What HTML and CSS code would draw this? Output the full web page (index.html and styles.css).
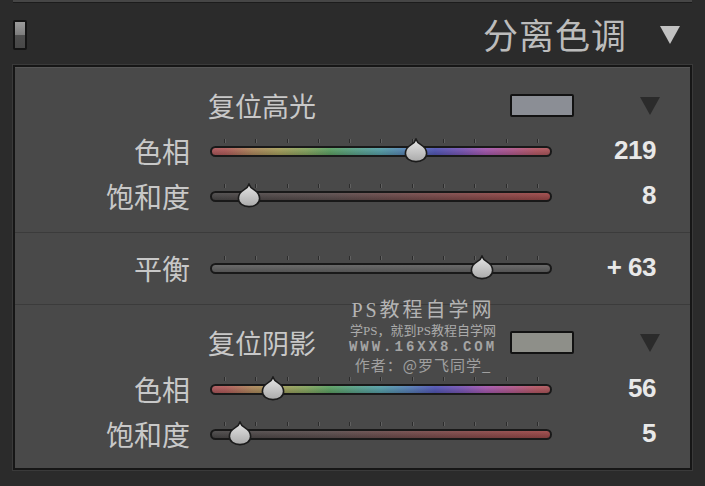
FILE: index.html
```html
<!DOCTYPE html>
<html lang="zh-CN">
<head>
<meta charset="utf-8">
<title>分离色调</title>
<link rel="stylesheet" href="styles.css">
</head>
<body>
<div class="topband"></div>
<header class="header">
  <div class="toggle"></div>
  <h1 class="title">分离色调</h1>
  <svg class="hdr-tri" width="22" height="20" viewBox="0 0 22 20"><polygon points="1,1 21,1 11,19" fill="#c2c2c2"/></svg>
</header>

<div class="panel">
  <section class="sec sec1">
    <div class="row head">
      <span class="spacer"></span>
      <span class="htext">复位高光</span>
      <span class="swatch sw-hi"></span>
      <svg class="sec-tri" width="20" height="18" viewBox="0 0 20 18"><polygon points="0,0 20,0 10,18" fill="#2b2b2b"/></svg>
    </div>
    <div class="row">
      <span class="label">色相</span>
      <div class="slider">
        <div class="ticks"><i></i><i></i><i></i><i></i><i></i><i></i><i></i><i></i><i></i><i></i><i></i></div>
        <div class="bar hue"></div>
        <svg class="thumb" style="left:206px" width="24" height="25" viewBox="0 0 24 25"><use href="#th"/></svg>
      </div>
      <span class="val">219</span>
    </div>
    <div class="row">
      <span class="label">饱和度</span>
      <div class="slider">
        <div class="ticks"><i></i><i></i><i></i><i></i><i></i><i></i><i></i><i></i><i></i><i></i><i></i></div>
        <div class="bar sat"></div>
        <svg class="thumb" style="left:39px" width="24" height="25" viewBox="0 0 24 25"><use href="#th"/></svg>
      </div>
      <span class="val">8</span>
    </div>
  </section>

  <section class="sec sec2">
    <div class="row">
      <span class="label">平衡</span>
      <div class="slider">
        <div class="ticks"><i></i><i></i><i></i><i></i><i></i><i></i><i></i><i></i><i></i><i></i><i></i></div>
        <div class="bar bal"></div>
        <svg class="thumb" style="left:272px" width="24" height="25" viewBox="0 0 24 25"><use href="#th"/></svg>
      </div>
      <span class="val">+ 63</span>
    </div>
  </section>

  <section class="sec sec3">
    <div class="row head">
      <span class="spacer"></span>
      <span class="htext">复位阴影</span>
      <span class="swatch sw-sh"></span>
      <svg class="sec-tri" width="20" height="18" viewBox="0 0 20 18"><polygon points="0,0 20,0 10,18" fill="#2b2b2b"/></svg>
    </div>
    <div class="row r-hue2">
      <span class="label">色相</span>
      <div class="slider">
        <div class="ticks"><i></i><i></i><i></i><i></i><i></i><i></i><i></i><i></i><i></i><i></i><i></i></div>
        <div class="bar hue"></div>
        <svg class="thumb" style="left:63px" width="24" height="25" viewBox="0 0 24 25"><use href="#th"/></svg>
      </div>
      <span class="val">56</span>
    </div>
    <div class="row r-sat2">
      <span class="label">饱和度</span>
      <div class="slider">
        <div class="ticks"><i></i><i></i><i></i><i></i><i></i><i></i><i></i><i></i><i></i><i></i><i></i></div>
        <div class="bar sat"></div>
        <svg class="thumb" style="left:30px" width="24" height="25" viewBox="0 0 24 25"><use href="#th"/></svg>
      </div>
      <span class="val">5</span>
    </div>
  </section>

  <div class="wm">
    <div class="wm1">PS教程自学网</div>
    <div class="wm2">学PS，就到PS教程自学网</div>
    <div class="wm3">WWW.16XX8.COM</div>
    <div class="wm4">作者：@罗飞同学_</div>
  </div>
</div>

<svg class="defs" width="0" height="0">
  <defs>
    <linearGradient id="tg" x1="0" y1="0" x2="0" y2="1">
      <stop offset="0" stop-color="#e6e6e6"/>
      <stop offset="1" stop-color="#aaaaaa"/>
    </linearGradient>
    <symbol id="th" viewBox="0 0 24 25">
      <path d="M12 1.2 C12.8 3.6 14.4 5.2 16.8 6.6 C20.4 8.6 22.6 11.6 22.6 15.6 C22.6 20.6 18 23.6 12 23.6 C6 23.6 1.4 20.6 1.4 15.6 C1.4 11.6 3.6 8.6 7.2 6.6 C9.6 5.2 11.2 3.6 12 1.2 Z" fill="url(#tg)" stroke="#1b1b1b" stroke-width="1.6"/>
    </symbol>
  </defs>
</svg>
</body>
</html>
```
FILE: styles.css
```css
* { box-sizing: border-box; }
html, body { margin: 0; padding: 0; }
body {
  background: #2b2b2b;
  width: 705px;
  height: 486px;
  overflow: hidden;
  font-family: "Noto Sans CJK SC", "Liberation Sans", sans-serif;
  color: #c6c6c6;
}
.topband {
  height: 3px;
  margin: 0 13px;
  background: #464646;
  border-bottom: 1px solid #1c1c1c;
}
.header {
  height: 62px;
  display: flex;
  align-items: center;
  padding: 0 24px 0 13px;
}
.toggle {
  width: 14px;
  height: 30px;
  border: 2px solid #141414;
  border-radius: 2px;
  background: linear-gradient(to bottom, #9c9c9c 0, #7e7e7e 48%, #4e4e4e 52%, #484848 100%);
  margin-top: 2px;
}
.title {
  margin: 0 32px 0 auto;
  font-size: 35px;
  font-weight: 400;
  line-height: 40px;
  color: #bcbcbc;
  letter-spacing: 1px;
}
.hdr-tri { display: block; margin-top: 2px; }

.panel {
  position: relative;
  margin: 0 13px;
  background: #494949;
  border: 2px solid #161616;
  box-shadow: inset 0 1px 0 #565656, 0 0 0 1px #3a3a3a;
}
.sec1 { padding: 16px 0 14px; border-bottom: 1px solid #3b3b3b; }
.sec2 { padding: 12px 0 14px; border-bottom: 1px solid #3b3b3b; }
.sec3 { padding: 15px 0 13px; }

.row {
  height: 45px;
  display: flex;
  align-items: center;
}
.r-hue2 { height: 47px; }
.r-sat2 { height: 43px; }
.label {
  width: 175px;
  margin-right: 20px;
  text-align: right;
  font-size: 28px;
  line-height: 34px;
  color: #c8c8c8;
}
.val {
  width: 104px;
  text-align: right;
  font-family: "Liberation Sans", sans-serif;
  font-weight: 700;
  font-size: 26px;
  color: #e8e8e8;
  letter-spacing: -0.5px;
}

.head .spacer { width: 193px; }
.htext {
  width: 302px;
  font-size: 27px;
  line-height: 34px;
  color: #c8c8c8;
}
.swatch {
  width: 64px;
  height: 23px;
  border: 2px solid #121212;
  border-radius: 2px;
}
.sw-hi { background: #8b8e95; }
.sw-sh { background: #8e8f89; }
.sec-tri { display: block; margin-left: 66px; }

.slider {
  position: relative;
  width: 342px;
  height: 26px;
  display: flex;
  flex-direction: column;
}
.ticks {
  height: 4px;
  margin: 1px 14px 3px;
  display: flex;
  justify-content: space-between;
}
.ticks i {
  display: block;
  width: 1px;
  height: 4px;
  background: #2c2c2c;
  box-shadow: 1px 0 0 rgba(140,140,140,0.35);
}
.bar {
  height: 11px;
  border-radius: 6px;
  border: 2px solid #191919;
}
.bar.hue {
  background:
    linear-gradient(to bottom, rgba(255,255,255,0.06), rgba(0,0,0,0.2)),
    linear-gradient(to right,
      #b05a5e 0%, #b45e5c 4%, #b08a5e 12%, #a8a25e 20%, #88a862 28%,
      #5ea466 35%, #5aa48e 43%, #58a2ac 50%, #5882b8 58%, #5458b8 66%,
      #7c58b8 74%, #a85ab2 81%, #b45a8e 89%, #b85a66 96%, #b05a5e 100%);
}
.bar.sat {
  background:
    linear-gradient(to bottom, rgba(255,255,255,0.05), rgba(0,0,0,0.2)),
    linear-gradient(to right, #4c4a4a 0%, #5e5050 35%, #864c4c 75%, #a04a4a 100%);
}
.bar.bal {
  background: linear-gradient(to bottom, #6a6a6a, #535353);
}
.thumb {
  position: absolute;
  top: 0;
  margin-left: -12px;
  display: block;
}

.wm {
  position: absolute;
  left: 318px;
  top: 231px;
  width: 180px;
  text-align: center;
  color: #ababab;
  pointer-events: none;
}
.wm1 {
  font-size: 20px;
  line-height: 25px;
  letter-spacing: 3px;
  font-family: "Liberation Serif", "Noto Sans CJK SC", serif;
  color: #b4b4b4;
}
.wm2 {
  font-size: 13px;
  line-height: 16px;
  font-family: "Liberation Serif", "Noto Sans CJK SC", serif;
}
.wm3 {
  font-family: "Liberation Mono", monospace;
  font-size: 14px;
  line-height: 16px;
  font-weight: 700;
  letter-spacing: 3px;
  color: #a4a4a4;
}
.wm4 {
  font-size: 15px;
  line-height: 20px;
  letter-spacing: 1px;
  color: #a0a0a0;
}
.defs { position: absolute; width: 0; height: 0; }
```
